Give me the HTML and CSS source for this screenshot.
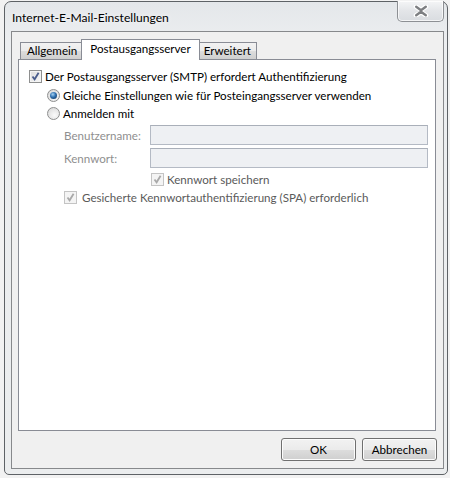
FILE: index.html
```html
<!DOCTYPE html>
<html lang="de">
<head>
  <meta charset="UTF-8" />
  <meta name="viewport" content="width=device-width, initial-scale=1.0"/>
  <title>Internet-E-Mail-Einstellungen</title>
  <link rel="stylesheet" href="styles.css">
</head>
<body>
  <div class="fenster">
    <!-- Titelleiste -->
    <div class="titelleiste">
      <span class="titel">Internet-E-Mail-Einstellungen</span>
      <button class="schliessen" type="button">
        <svg width="16" height="12" viewBox="0 0 16 12">
          <path d="M3 1.5 L8 5 L13 1.5 M3 10.5 L8 7 L13 10.5" fill="none" stroke="#fff" stroke-width="4.6" stroke-linecap="round"/>
          <path d="M3.2 1.8 L8 5.2 L12.8 1.8 M3.2 10.2 L8 6.8 L12.8 10.2 M8 5.2 L8 6.8" fill="none" stroke="#7d7f82" stroke-width="2.4" stroke-linecap="round"/>
        </svg>
      </button>
    </div>

    <div class="inhalt">
      <div class="reiter">
        <div class="tab">Allgemein</div>
        <div class="tab aktiv">Postausgangsserver</div>
        <div class="tab">Erweitert</div>
      </div>

      <div class="seite">
        <div class="zeile">
          <span class="box an"><svg width="11" height="11" viewBox="0 0 11 11"><path d="M2.5 5.5 L4.6 8.3 L8.6 1.8" fill="none" stroke="#495c8c" stroke-width="1.8"/></svg></span>
          Der Postausgangsserver (SMTP) erfordert Authentifizierung
        </div>
        <div class="zeile einzug z2">
          <span class="radio an"></span>
          Gleiche Einstellungen wie für Posteingangsserver verwenden
        </div>
        <div class="zeile einzug">
          <span class="radio"></span>
          Anmelden mit
        </div>

        <div class="feld">
          <span class="feld-name">Benutzername:</span>
          <span class="eingabe"></span>
        </div>
        <div class="feld">
          <span class="feld-name">Kennwort:</span>
          <span class="eingabe"></span>
        </div>

        <div class="zeile grau speichern">
          <span class="box aus"><svg width="11" height="11" viewBox="0 0 11 11"><path d="M2.5 5.5 L4.6 8.3 L8.6 1.8" fill="none" stroke="#a9a9a9" stroke-width="1.8"/></svg></span>
          Kennwort speichern
        </div>
        <div class="zeile grau spa">
          <span class="box aus"><svg width="11" height="11" viewBox="0 0 11 11"><path d="M2.5 5.5 L4.6 8.3 L8.6 1.8" fill="none" stroke="#a9a9a9" stroke-width="1.8"/></svg></span>
          Gesicherte Kennwortauthentifizierung (SPA) erforderlich
        </div>
      </div>

      <div class="knoepfe">
        <button class="knopf" type="button">OK</button>
        <button class="knopf" type="button">Abbrechen</button>
      </div>
    </div>
  </div>
</body>
</html>
```

FILE: styles.css
```css
* { box-sizing: border-box; }

body {
  margin: 0;
  width: 450px;
  height: 478px;
  background: #f2f2f2;
  font-family: Lato, "Liberation Sans", sans-serif;
  font-size: 11.6px;
  color: #000;
  overflow: hidden;
}

.fenster {
  margin: 1px 0 0 4px;
  width: 444px;
  height: 474px;
  border: 1px solid #5e6266;
  border-radius: 7px 7px 5px 5px;
  background: linear-gradient(#e4e7ea, #eceef0 40px, #ebedee);
  padding: 0 3px 5px 6px;
  display: flex;
  flex-direction: column;
}

/* Titelleiste */
.titelleiste {
  height: 29px;
  display: flex;
  align-items: flex-start;
}

.titel {
  padding: 8px 0 0 1px;
  font-size: 12.1px;
  text-shadow: 0 0 6px #fff;
}

.schliessen {
  margin: -1px 0 0 auto;
  width: 47px;
  height: 21px;
  padding: 0;
  border: 1px solid #8d9094;
  border-top: none;
  border-radius: 0 0 5px 5px;
  background: linear-gradient(#f4f5f6, #e3e5e8 50%, #d9dce0);
  box-shadow: inset 0 0 0 1px rgba(255,255,255,0.7);
  display: flex;
  align-items: center;
  justify-content: center;
}

/* Fensterinhalt */
.inhalt {
  flex: 1;
  border: 1px solid #87898c;
  background: #f0f0f0;
  display: flex;
  flex-direction: column;
  padding: 7px 0 7px 0;
}

.reiter {
  display: flex;
  align-items: flex-end;
  height: 20px;
  padding-left: 8px;
  position: relative;
  z-index: 1;
}

.tab {
  height: 17px;
  padding: 0 6px;
  line-height: 16px;
  border: 1px solid #898c95;
  border-bottom: none;
  background: linear-gradient(#f2f2f2, #ebebeb 50%, #dddddd 51%, #cfcfcf);
  margin-left: -1px;
}

.tab:first-child { margin-left: 0; }

.tab:last-child { padding: 0 5px; }

.tab.aktiv {
  height: 21px;
  margin: 0 -2px -1px -3px;
  padding: 0 8px;
  line-height: 18px;
  background: #fff;
  position: relative;
}

.tab.aktiv + .tab { margin-left: 0; }

.seite {
  flex: 1;
  margin: 0 7px 0 6px;
  border: 1px solid #898c95;
  background: #fff;
  padding: 7px 7px 0 10px;
}

.zeile {
  height: 19px;
  display: flex;
  align-items: center;
}

.z2 { height: 18px; }

.einzug { padding-left: 18px; }

.box {
  width: 13px;
  height: 13px;
  margin-right: 3px;
  border: 1px solid #8e8f8f;
  background: linear-gradient(135deg, #dcdcdc, #f8f8f8);
  box-shadow: inset 0 0 0 1px #f4f4f4;
  display: flex;
  align-items: center;
  justify-content: center;
}

.box.aus {
  border-color: #c4c4c4;
  background: #f4f4f4;
}

.radio {
  width: 13px;
  height: 13px;
  margin-right: 3px;
  border-radius: 50%;
  border: 1px solid #8e8f8f;
  background: radial-gradient(circle at 60% 65%, #fafafa 0, #e6e6e6 55%, #d2d2d2);
  display: flex;
  align-items: center;
  justify-content: center;
}

.radio.an::after {
  content: "";
  width: 7px;
  height: 7px;
  border-radius: 50%;
  background: radial-gradient(circle at 40% 35%, #a6d2f2 0, #2f70b0 45%, #173e68 85%);
}

.feld {
  display: flex;
  align-items: center;
  height: 20px;
  margin-top: 2px;
  padding-left: 35px;
}

.feld + .feld { margin-top: 3px; }

.feld-name {
  width: 86px;
  color: #8f8f8f;
}

.eingabe {
  flex: 1;
  height: 20px;
  border: 1px solid #b4bac4;
  border-top-color: #a9afb9;
  background: #eef0f3;
}

.grau { color: #5a5a5a; }

.speichern {
  height: 18px;
  margin-top: 2px;
  padding-left: 122px;
}

.spa {
  height: 18px;
  padding-left: 35px;
}

.spa .box { margin-right: 5px; }

/* Schaltflächen unten */
.knoepfe {
  display: flex;
  justify-content: flex-end;
  gap: 6px;
  padding: 7px 6px 0 0;
}

.knopf {
  width: 75px;
  height: 23px;
  padding: 0;
  font-family: inherit;
  font-size: 11.6px;
  color: #000;
  border: 1px solid #707070;
  border-radius: 3px;
  background: linear-gradient(#f2f2f2, #ebebeb 50%, #dddddd 51%, #cfcfcf);
  box-shadow: inset 0 0 0 1px #fcfcfc;
}
```
